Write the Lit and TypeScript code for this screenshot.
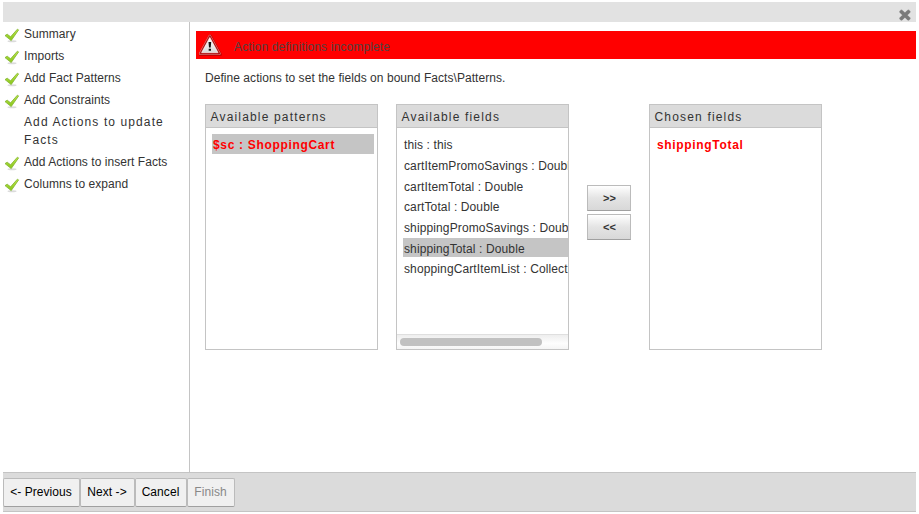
import { LitElement, html, css } from "lit";
import { customElement, property } from "lit/decorators.js";
import { classMap } from "lit/directives/class-map.js";

const tick = html`<svg class="tick" width="16" height="16" viewBox="0 0 16 16">
  <defs><linearGradient id="g" x1="0" y1="0" x2="0" y2="1"><stop offset="0" stop-color="#c0e84a"/><stop offset="1" stop-color="#86c41a"/></linearGradient></defs>
  <ellipse cx="8" cy="14.2" rx="4.5" ry="1" fill="#000" opacity=".14"/>
  <path d="M1 8.6 3.2 7.2 6.6 9.8 13.4 2.2 14.6 2.9 7.2 13.6Z" fill="url(#g)" stroke="#7fb22c" stroke-width=".8" stroke-linejoin="round"/>
</svg>`;

@customElement("wizard-panel")
class WizardPanel extends LitElement {
  @property() heading = "";
  @property({ type: Array }) items: string[] = [];
  @property({ type: Number }) selected = -1;
  @property({ type: Boolean }) invalid = false;
  @property({ type: Boolean }) scrolls = false;
  static styles = css`
    :host { display: flex; flex-direction: column; box-sizing: border-box; width: 173px; height: 246px; border: 1px solid #c4c4c4; background: #fff; overflow: hidden; }
    .head { height: 22px; flex: none; line-height: 24px; padding-left: 4.5px; background: #dbdbdb; border-bottom: 1px solid #c4c4c4; letter-spacing: 1.17px; }
    .list { flex: 1; padding: 6px 3px 0 6px; display: flex; flex-direction: column; gap: 1px; }
    .list.wide { padding-right: 0; padding-top: 6.3px; }
    .item { height: 19.67px; line-height: 22px; padding-left: 1px; white-space: nowrap; overflow: hidden; letter-spacing: .12px; }
    .item.sel { background: #c5c5c5; }
    .item.bad { color: #f00; font-weight: bold; letter-spacing: .67px; }
    .track { flex: none; height: 8px; border-top: 1px solid #dfdfdf; background: linear-gradient(#eee, #fdfdfd 60%, #f5f5f5); padding: 3px; }
    .thumb { width: 142px; height: 8px; border-radius: 4px; background: #c1c1c1; }
  `;
  render() {
    return html`<div class="head">${this.heading}</div>
      <div class=${classMap({ list: true, wide: this.scrolls })}>
        ${this.items.map((t, i) => html`<div class=${classMap({ item: true, sel: i === this.selected, bad: this.invalid })}>${t}</div>`)}
      </div>
      ${this.scrolls ? html`<div class="track"><div class="thumb"></div></div>` : ""}`;
  }
}

@customElement("app-root")
class AppRoot extends LitElement {
  static styles = css`
    :host { display: block; box-sizing: border-box; width: 919px; height: 514px; padding: 2px 3px; background: #fff; color: #333; font: 12px "Liberation Sans", Arial, sans-serif; overflow: hidden; }
    .wizard { display: flex; flex-direction: column; height: 510px; }
    .title { height: 20px; flex: none; background: #e2e2e2; display: flex; justify-content: flex-end; padding-right: 5px; }
    .close { margin-top: 7px; }
    .body { flex: 1; display: flex; }
    .steps { width: 186px; border-right: 1px solid #c4c4c4; padding-top: 3px; display: flex; flex-direction: column; gap: 4px; }
    .step { display: flex; line-height: 18px; letter-spacing: .05px; }
    .mark { width: 21px; flex: none; height: 18px; }
    .tick { display: block; margin: 2px 0 0 1px; }
    .step.current { letter-spacing: 1.1px; }
    .main { flex: 1; padding: 9px 0 0 6px; }
    .alert { height: 28px; background: #f00; display: flex; line-height: 33px; color: #554040; letter-spacing: .14px; }
    .warn { margin: 2px 12px 0 2px; }
    .hint { margin: 10px 0 0 9px; line-height: 18px; height: 18px; letter-spacing: .05px; }
    .panels { display: flex; margin: 17px 0 0 9px; align-items: flex-start; }
    .gap { margin-left: 18px; }
    .moves { display: flex; flex-direction: column; gap: 3px; margin: 81px 18px 0; }
    .move { font: bold 11px "Liberation Sans", Arial, sans-serif; color: #333; width: 44px; height: 26px; padding: 0 0 0 1px; border: 1px solid #bbb; border-bottom-color: #a0a0a0; border-radius: 0; background: linear-gradient(#fff, #e4e4e4 50%, #d8d8d8); }
    .foot { box-sizing: border-box; height: 40px; flex: none; background: #dbdbdb; border-top: 1px solid #c4c4c4; border-bottom: 1px solid #c4c4c4; padding-top: 5px; display: flex; }
    .btn { box-sizing: border-box; height: 29px; padding: 0 1px 2px 0; font: 12px "Liberation Sans", Arial, sans-serif; letter-spacing: .06px; color: #000; background: #f0f0f0; border: 1px solid #bbb; border-bottom-color: #a0a0a0; border-radius: 2px; }
    .btn:disabled { color: #888; }
    .w-prev { width: 77px; } .w-next { width: 55px; } .w-cancel { width: 52px; } .w-finish { width: 48px; }
  `;
  render() {
    const steps = ["Summary", "Imports", "Add Fact Patterns", "Add Constraints", "Add Actions to update Facts", "Add Actions to insert Facts", "Columns to expand"];
    return html`<div class="wizard">
      <div class="title"><svg class="close" width="12" height="12" viewBox="0 0 12 12">
        <path d="M2.4 2.8 9.4 9.4M9.4 2.8 2.4 9.4" stroke="#707070" stroke-width="4" stroke-linecap="square" stroke-opacity=".35"/>
        <path d="M2.4 2.8 9.4 9.4M9.4 2.8 2.4 9.4" stroke="#7a7a7a" stroke-width="3.4" stroke-linecap="round"/></svg></div>
      <div class="body">
        <div class="steps">${steps.map((s, i) => html`<div class=${classMap({ step: true, current: i === 4 })}>
          <div class="mark">${i === 4 ? "" : tick}</div><div>${s}</div></div>`)}</div>
        <div class="main">
          <div class="alert"><svg class="warn" width="24" height="24" viewBox="0 0 24 24">
            <defs><linearGradient id="w" x1="0" y1="0" x2="0" y2="1"><stop offset="0" stop-color="#fff"/><stop offset="1" stop-color="#d9d9d9"/></linearGradient></defs>
            <path d="M12.4 3.2 22.3 21.5H2.4Z" fill="none" stroke="#820000" stroke-width="3.2" stroke-linejoin="round" opacity=".45"/>
            <path d="M11.8 3 21.4 20.6H2.2Z" fill="#b01010" stroke="#e58a8a" stroke-width="2.6" stroke-linejoin="round"/>
            <path d="M11.8 3 21.4 20.6H2.2Z" fill="#b01010" stroke="#b01818" stroke-width="1.6" stroke-linejoin="round"/>
            <path d="M11.8 4.6 19.9 19.6H3.7Z" fill="url(#w)" stroke="#fff" stroke-width=".7" stroke-linejoin="round"/>
            <path d="M10.5 9h2.7l-.5 5.6h-1.7ZM10.7 15.7h2.3v2.1h-2.3Z" fill="#111"/>
          </svg><span>Action definitions incomplete</span></div>
          <div class="hint">Define actions to set the fields on bound Facts\\Patterns.</div>
          <div class="panels">
            <wizard-panel heading="Available patterns" .items=${["$sc : ShoppingCart"]} .selected=${0} invalid></wizard-panel>
            <wizard-panel class="gap" heading="Available fields" .selected=${5} scrolls .items=${["this : this", "cartItemPromoSavings : Double", "cartItemTotal : Double", "cartTotal : Double", "shippingPromoSavings : Double", "shippingTotal : Double", "shoppingCartItemList : Collection"]}></wizard-panel>
            <div class="moves"><button class="move">&gt;&gt;</button><button class="move">&lt;&lt;</button></div>
            <wizard-panel heading="Chosen fields" .items=${["shippingTotal"]} invalid></wizard-panel>
          </div>
        </div>
      </div>
      <div class="foot">
        <button class="btn w-prev">&lt;- Previous</button><button class="btn w-next">Next -&gt;</button><button class="btn w-cancel">Cancel</button><button class="btn w-finish" disabled>Finish</button>
      </div>
    </div>`;
  }
}
